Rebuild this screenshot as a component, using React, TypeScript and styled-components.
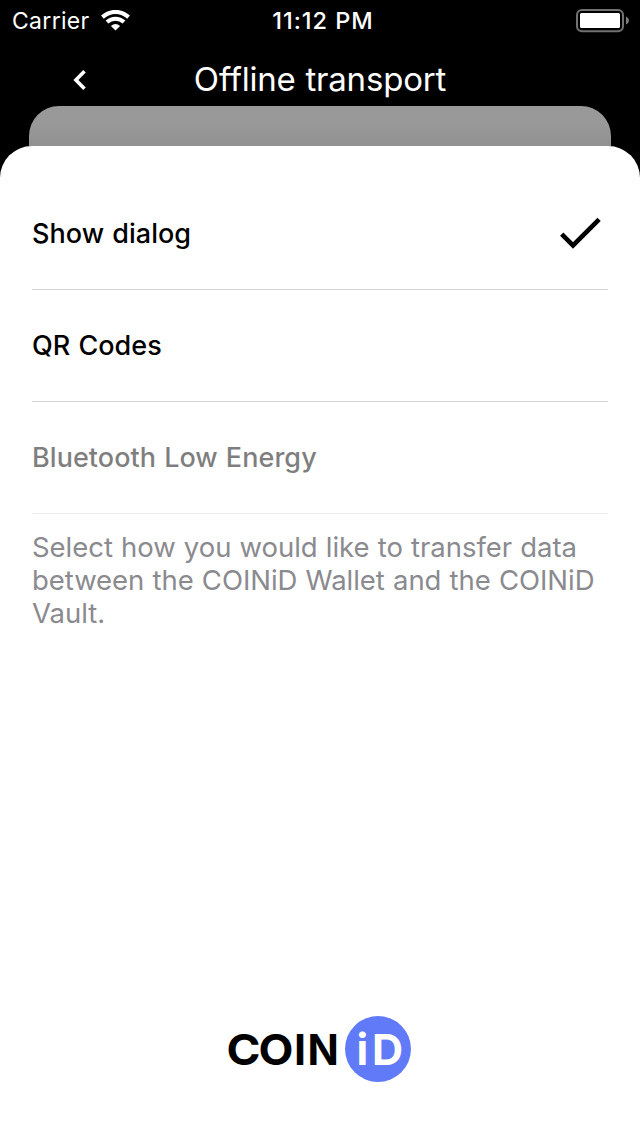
import React from 'react';
import styled, { createGlobalStyle } from 'styled-components';

const GlobalStyle = createGlobalStyle`
  * { box-sizing: border-box; }
  body { margin: 0; background: #000; font-family: Inter, "Liberation Sans", sans-serif; }
`;

const Screen = styled.main`
  width: 640px;
  height: 1136px;
  display: flex;
  flex-direction: column;
  background: #000;
  overflow: hidden;
`;

const StatusBar = styled.header`
  height: 40px;
  flex: none;
  display: grid;
  grid-template-columns: 1fr auto 1fr;
  align-items: center;
  padding: 0 11px 0 12px;
  color: #fff;
  font-size: 23px;
  line-height: 38px;
`;

const Carrier = styled.div`
  display: flex;
  align-items: center;
  gap: 11px;
  letter-spacing: 0.3px;
`;

const StatusText = styled.span`
  padding-top: 2px;
`;

const Clock = styled.div`
  padding: 2px 0 0 5px;
  font-size: 23.5px;
  font-weight: 500;
  letter-spacing: 0.95px;
`;

const BatterySlot = styled.div`
  display: flex;
  justify-content: flex-end;
  padding-top: 1px;
`;

const NavBar = styled.nav`
  height: 66px;
  flex: none;
  display: grid;
  grid-template-columns: 160px 1fr 160px;
  align-items: center;
  padding-top: 14px;
  color: #fff;
`;

const BackButton = styled.button`
  border: 0;
  padding: 0;
  background: none;
  color: inherit;
  display: flex;
  justify-content: center;
`;

const Title = styled.h1`
  margin: 0;
  padding-bottom: 2px;
  font-size: 33px;
  line-height: 40px;
  font-weight: 400;
  text-align: center;
  white-space: nowrap;
  letter-spacing: -0.18px;
  word-spacing: 0.6px;
`;

const BackCard = styled.div`
  height: 40px;
  flex: none;
  margin: 0 29px;
  border-radius: 30px 30px 0 0;
  background: linear-gradient(#999 0, #999 18px, #919191 40px);
`;

const Sheet = styled.section`
  flex: 1;
  display: flex;
  flex-direction: column;
  padding: 32px 32px 54px;
  border-radius: 32px 32px 0 0;
  background: #fff;
`;

const Option = styled.div<{ $disabled?: boolean }>`
  height: 112px;
  flex: none;
  display: flex;
  align-items: center;
  justify-content: space-between;
  padding-right: 7px;
  border-bottom: 1px solid #d5d5d6;
  color: #000;
  font-size: 27px;
  font-weight: 500;
  letter-spacing: 0.05px;
  word-spacing: 0.8px;
  opacity: ${(p) => (p.$disabled ? 0.5 : 1)};
`;

const CheckMark = styled.svg`
  margin-bottom: 2px;
`;

const Hint = styled.p`
  margin: 17px -10px 0 0;
  color: #8a8a8f;
  font-size: 27.5px;
  line-height: 33px;
  letter-spacing: -0.04px;
  word-spacing: 0.5px;
`;

const Footer = styled.footer`
  margin-top: auto;
  display: flex;
  justify-content: center;
  height: 66px;
`;

const WordMark = styled.svg`
  display: block;
  font-family: Inter, "Liberation Sans", sans-serif;
  font-size: 43px;
  font-weight: 700;
`;

const CoinLogo = () => (
  <WordMark width="200" height="66" viewBox="-8 0 200 66">
    <text transform="translate(-1.5 48.8) scale(1.07 1)">C</text>
    <text transform="translate(30.6 48.8) scale(1.055 1)">O</text>
    <text x="65.9" y="48.8">I</text>
    <text transform="translate(79.5 48.8) scale(0.955 1)">N</text>
    <circle cx="150" cy="33" r="33" fill="#617bf8" />
    <text x="128.6 143.9" y="48.8" fill="#fff">iD</text>
  </WordMark>
);

const WifiIcon = () => (
  <svg width="29" height="21" viewBox="0 0 29 21">
    <g fill="none" stroke="#fff" strokeWidth="4.1">
      <path d="M1.4 7.1Q7.2 1.9 14.5 1.9T27.6 7.1" />
      <path d="M6 12Q9.6 8.7 14.5 8.7T23 12" />
    </g>
    <path d="M9.9 16Q14.5 12 19.1 16L14.5 20.4Z" fill="#fff" />
  </svg>
);

const BatteryIcon = () => (
  <svg width="53" height="24" viewBox="0 0 53 24">
    <rect x="1" y="1" width="46" height="21.2" rx="5" fill="none" stroke="#727272" strokeWidth="2" />
    <rect x="4" y="4" width="40" height="15" rx="1.5" fill="#fff" />
    <path d="M50 7.5Q53 9 53 11.5T50 15.5Z" fill="#808080" />
  </svg>
);

export default function App() {
  return (
    <Screen>
      <GlobalStyle />
      <StatusBar>
        <Carrier><StatusText>Carrier</StatusText><WifiIcon /></Carrier>
        <Clock>11:12 PM</Clock>
        <BatterySlot><BatteryIcon /></BatterySlot>
      </StatusBar>
      <NavBar>
        <BackButton aria-label="Back">
          <svg width="16" height="22" viewBox="0 0 16 22">
            <path d="M12.5 2.2L3.9 11L12.5 19.8" fill="none" stroke="#fff" strokeWidth="3.6" />
          </svg>
        </BackButton>
        <Title>Offline transport</Title>
      </NavBar>
      <BackCard />
      <Sheet>
        <Option>
          Show dialog
          <CheckMark width="41" height="32" viewBox="0 0 41 32">
            <path d="M1.7 17.2L13 28.5L39.1 2.4" fill="none" stroke="#000" strokeWidth="4.6" />
          </CheckMark>
        </Option>
        <Option>QR Codes</Option>
        <Option $disabled>Bluetooth Low Energy</Option>
        <Hint>
          Select how you would like to transfer data<br />
          between the COINiD Wallet and the COINiD<br />
          Vault.
        </Hint>
        <Footer><CoinLogo /></Footer>
      </Sheet>
    </Screen>
  );
}
